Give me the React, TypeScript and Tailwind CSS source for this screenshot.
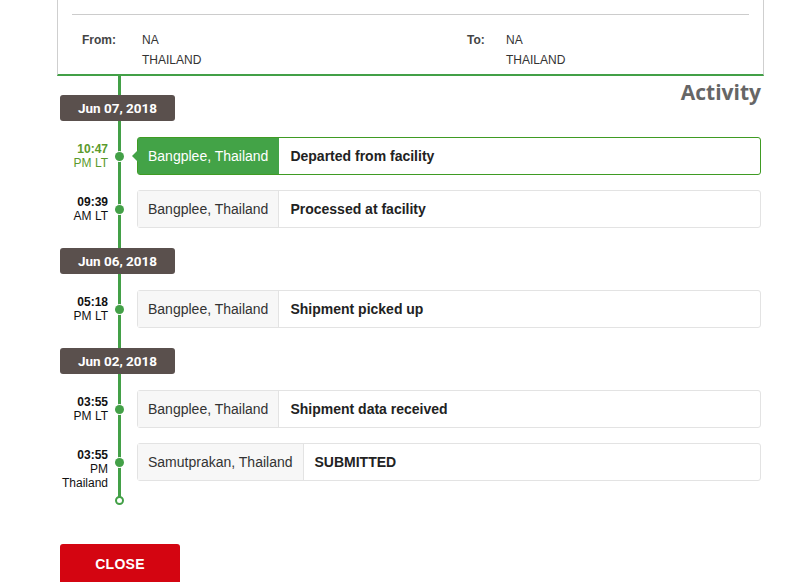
type Event = {
  time: string[];
  location: string;
  text: string;
  active?: boolean;
};

type Day = { date: string; events: Event[] };

const DAYS: Day[] = [
  {
    date: 'Jun 07, 2018',
    events: [
      { time: ['10:47', 'PM LT'], location: 'Bangplee, Thailand', text: 'Departed from facility', active: true },
      { time: ['09:39', 'AM LT'], location: 'Bangplee, Thailand', text: 'Processed at facility' },
    ],
  },
  {
    date: 'Jun 06, 2018',
    events: [{ time: ['05:18', 'PM LT'], location: 'Bangplee, Thailand', text: 'Shipment picked up' }],
  },
  {
    date: 'Jun 02, 2018',
    events: [
      { time: ['03:55', 'PM LT'], location: 'Bangplee, Thailand', text: 'Shipment data received' },
      { time: ['03:55', 'PM', 'Thailand'], location: 'Samutprakan, Thailand', text: 'SUBMITTED' },
    ],
  },
];

function DateBadge({ date }: { date: string }) {
  return (
    <div className="ml-[3px] w-[115px] h-[26px] rounded-[3px] bg-[#5a504d] text-white text-[13.5px] font-bold flex items-center justify-center font-['Roboto',sans-serif] relative z-10">
      {date}
    </div>
  );
}

function EventRow({ ev }: { ev: Event }) {
  return (
    <div className="flex items-center h-[38px]">
      {/* two lines sit beside the dot, a third one hangs below */}
      <div
        className={`w-[51px] h-[28px] text-right text-[12px] leading-[14px] ${ev.active ? 'text-[#5b9a2c]' : 'text-[#111]'}`}
      >
        {ev.time.map((t, i) => (
          <div key={i} className={i === 0 ? 'font-bold' : ''}>
            {t}
          </div>
        ))}
      </div>
      <div className="w-[23px] flex justify-center relative z-10">
        <div className="w-[9px] h-[9px] rounded-full bg-[#43a047] ring-1 ring-white" />
      </div>
      <div
        className={`ml-[6px] mr-[3px] flex-1 h-[38px] flex items-stretch rounded-[3px] border relative ${
          ev.active ? 'border-[#3f9b23]' : 'border-[#e3e3e3]'
        }`}
      >
        {ev.active && (
          <div className="absolute left-[-6px] top-1/2 -translate-y-1/2 w-0 h-0 border-y-[6px] border-y-transparent border-r-[6px] border-r-[#43a347]" />
        )}
        <div
          className={`px-[10px] flex items-center text-[14px] border-r ${
            ev.active ? 'bg-[#43a347] text-white border-r-[#43a347]' : 'bg-[#f7f7f7] text-[#333] border-r-[#e3e3e3]'
          }`}
        >
          {ev.location}
        </div>
        <div className="pl-[11px] flex items-center text-[14px] font-bold text-[#222]">{ev.text}</div>
      </div>
    </div>
  );
}

export default function App() {
  return (
    <div className="bg-white w-[788px] h-[582px] overflow-hidden font-['Liberation_Sans',Arial,sans-serif]">
      <div className="ml-[57px] w-[707px]">
        {/* shipment addresses */}
        <div className="border-x border-[#cfcfcf] border-b-2 border-b-[#43a047] pt-[14px] pb-[4px] px-[14px]">
          <div className="border-t border-[#cccccc]" />
          <div className="flex pt-[15px] text-[12px] leading-[20px] text-[#333]">
            <div className="w-[395px] flex pl-[10px]">
              <div className="w-[60px] font-bold text-[#444]">From:</div>
              <div>
                <div>NA</div>
                <div>THAILAND</div>
              </div>
            </div>
            <div className="flex">
              <div className="w-[39px] font-bold text-[#444]">To:</div>
              <div>
                <div>NA</div>
                <div>THAILAND</div>
              </div>
            </div>
          </div>
        </div>

        {/* activity timeline */}
        <div className="relative">
          <div className="absolute left-[61px] top-0 h-[421px] w-[3px] bg-[#43a047]" />
          <div className="flex justify-between items-start">
            <div className="mt-[19px]">
              <DateBadge date={DAYS[0].date} />
            </div>
            <h2 className="mr-[3px] mt-[3px] text-[21px] leading-[26px] font-bold text-[#666] font-['Open_Sans',sans-serif]">
              Activity
            </h2>
          </div>
          {DAYS.map((day, di) => (
            <div key={day.date} className={di === 0 ? '' : 'mt-[20px]'}>
              {di > 0 && <DateBadge date={day.date} />}
              <div className="mt-[16px] flex flex-col gap-[15px]">
                {day.events.map((ev, i) => (
                  <EventRow key={i} ev={ev} />
                ))}
              </div>
            </div>
          ))}
          <div className="ml-[58px] mt-[15px] w-[9px] h-[9px] rounded-full border-2 border-[#43a047] bg-white relative z-10" />
        </div>

        <button className="mt-[39px] ml-[3px] w-[120px] h-[40px] rounded-[3px] bg-[#d40511] text-white text-[14px] font-bold tracking-[0.3px]">
          CLOSE
        </button>
      </div>
    </div>
  );
}
